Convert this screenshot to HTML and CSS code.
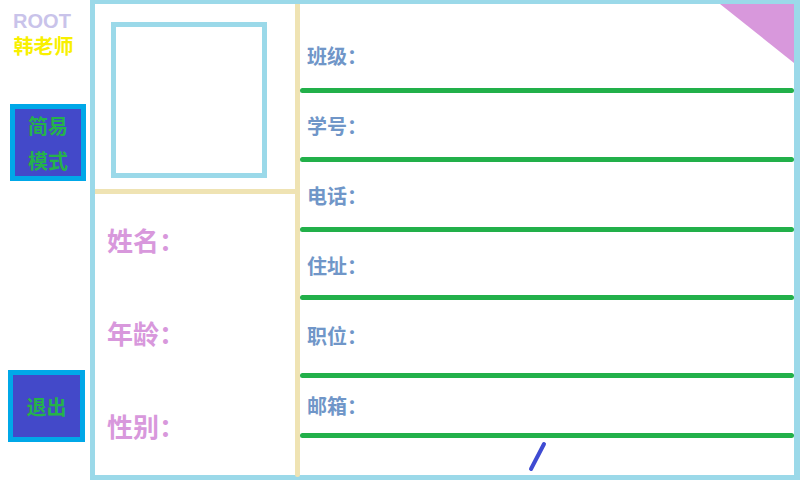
FILE: index.html
```html
<!DOCTYPE html>
<html lang="zh-CN">
<head>
<meta charset="utf-8">
<title>学生信息</title>
<link rel="stylesheet" href="styles.css">
</head>
<body>
<div class="page">
  <aside class="sidebar">
    <div class="user-role">ROOT</div>
    <div class="user-name">韩老师</div>
    <div class="btn btn-mode"><span>简易</span><span>模式</span></div>
    <div class="btn btn-exit"><span>退出</span></div>
  </aside>
  <main class="card">
    <section class="left-panel">
      <div class="photo-area"><div class="photo"></div></div>
      <div class="hline"></div>
      <div class="basic">
        <div class="basic-label">姓名：</div>
        <div class="basic-label">年龄：</div>
        <div class="basic-label">性别：</div>
      </div>
    </section>
    <div class="vline"></div>
    <section class="right-panel">
      <div class="field"><div class="field-label">班级：</div><div class="field-line"></div></div>
      <div class="field"><div class="field-label">学号：</div><div class="field-line"></div></div>
      <div class="field"><div class="field-label">电话：</div><div class="field-line"></div></div>
      <div class="field"><div class="field-label">住址：</div><div class="field-line"></div></div>
      <div class="field"><div class="field-label">职位：</div><div class="field-line"></div></div>
      <div class="field"><div class="field-label">邮箱：</div><div class="field-line"></div></div>
      <svg class="slash" width="20" height="32" viewBox="0 0 20 32"><line x1="3" y1="28" x2="16" y2="3" stroke="#3f4bd2" stroke-width="4" stroke-linecap="round"/></svg>
      <span class="corner">
        <svg width="74" height="59" viewBox="0 0 74 59"><polygon points="0,0 74,0 74,59" fill="#d898dc"/></svg>
      </span>
    </section>
  </main>
</div>
</body>
</html>
```

FILE: styles.css
```css
* { box-sizing: border-box; }
html, body { margin: 0; padding: 0; background: #ffffff; }
body { font-family: "Noto Sans CJK SC", "Noto Sans", sans-serif; }

.page {
  width: 800px;
  height: 480px;
  display: flex;
  overflow: hidden;
}

.sidebar {
  width: 90px;
  flex: none;
  display: flex;
  flex-direction: column;
  align-items: flex-start;
  padding-top: 9px;
}

.user-role {
  width: 84px;
  text-align: center;
  font-family: "Liberation Sans", Arial, sans-serif;
  font-weight: bold;
  font-size: 20px;
  line-height: 24px;
  color: #c9c3ea;
}

.user-name {
  width: 87px;
  text-align: center;
  font-weight: bold;
  font-size: 20px;
  line-height: 24px;
  margin-top: 1px;
  color: #f8f000;
}

.btn {
  display: flex;
  flex-direction: column;
  align-items: center;
  justify-content: center;
  background: #4349c9;
  border: 5px solid #00a8e8;
  color: #25b24a;
  font-weight: bold;
  font-size: 20px;
  line-height: 35px;
}

.btn-mode {
  margin-left: 10px;
  margin-top: 46px;
  width: 76px;
  height: 77px;
}

.btn-exit {
  margin-left: 8px;
  margin-top: 189px;
  width: 77px;
  height: 72px;
}

.card {
  position: relative;
  width: 710px;
  height: 480px;
  flex: none;
  border-style: solid;
  border-color: #9bd9e9;
  border-width: 4px 6px 5px 5px;
  display: grid;
  grid-template-columns: 200px 5px 1fr;
}

.left-panel {
  display: flex;
  flex-direction: column;
}

.photo-area {
  height: 185px;
  padding: 18px 0 0 16px;
}

.photo {
  width: 156px;
  height: 156px;
  border: 5px solid #9bd9e9;
}

.hline {
  height: 5px;
  background: #efe3b3;
}

.basic {
  display: flex;
  flex-direction: column;
  gap: 65px;
  padding: 32px 0 0 12px;
}

.basic-label {
  font-weight: bold;
  font-size: 26px;
  line-height: 28px;
  color: #d898dc;
}

.vline {
  background: #efe3b3;
  margin-bottom: -2px;
  border-radius: 0 0 3px 3px;
}

.right-panel {
  display: flex;
  flex-direction: column;
  padding-top: 42px;
}

.corner {
  position: absolute;
  top: 0;
  right: 0;
  line-height: 0;
}

.corner svg { display: block; }

.field {
  height: 70px;
  display: flex;
  flex-direction: column;
}

.field:nth-child(6) { height: 46px; }

.field-label {
  height: 20px;
  padding-left: 7px;
  font-weight: bold;
  font-size: 20px;
  line-height: 20px;
  color: #7096c8;
}

.field-line {
  height: 5px;
  margin-top: 21px;
  background: #22b04a;
  border-radius: 3px;
}

.field:nth-child(1) .field-line { margin-top: 22px; }
.field:nth-child(4) .field-line { margin-top: 19px; }
.field:nth-child(5) .field-line { margin-top: 27px; }
.field:nth-child(6) .field-line { margin-top: 17px; }

.slash {
  display: block;
  margin-left: 228px;
  margin-top: -1px;
}
```
